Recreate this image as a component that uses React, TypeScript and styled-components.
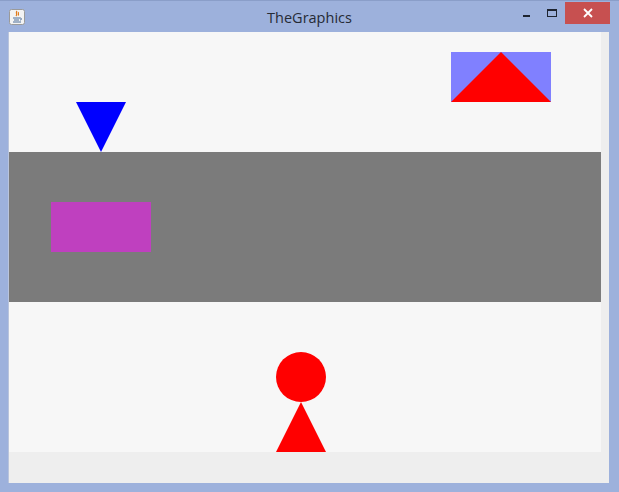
import React from "react";
import styled, { createGlobalStyle } from "styled-components";

const Global = createGlobalStyle`
  html, body { margin: 0; padding: 0; background: #9db1dc; }
  body { width: 619px; height: 492px; overflow: hidden; }
`;

const Window = styled.div`
  width: 619px;
  height: 492px;
  box-sizing: border-box;
  background: #9db1dc;
  border-top: 1px solid #8a9ec9;
  display: flex;
  flex-direction: column;
`;

const TitleBar = styled.div`
  height: 31px;
  display: flex;
  align-items: flex-start;
  position: relative;
`;

const AppIcon = styled.div`
  width: 16px;
  height: 16px;
  margin: 8px 0 0 9px;
`;

const Title = styled.div`
  position: absolute;
  left: 0;
  right: 0;
  top: 7px;
  text-align: center;
  font-family: "Open Sans", "Noto Sans", sans-serif;
  font-size: 14.5px;
  color: #262b36;
  pointer-events: none;
`;

const Controls = styled.div`
  margin-left: auto;
  margin-right: 9px;
  display: flex;
  align-items: flex-start;
`;

const CtrlButton = styled.div<{ $close?: boolean }>`
  width: ${(p) => (p.$close ? "45px" : "26px")};
  height: ${(p) => (p.$close ? "22px" : "20px")};
  margin-top: ${(p) => (p.$close ? "1px" : "0")};
  background: ${(p) => (p.$close ? "#c75050" : "transparent")};
  display: flex;
  align-items: center;
  justify-content: center;
`;

const MinGlyph = styled.div`
  width: 7px;
  height: 2px;
  background: #1e2430;
  margin-top: 10px;
`;

const MaxGlyph = styled.div`
  width: 8px;
  height: 5px;
  border: 1px solid #1e2430;
  border-top-width: 2px;
  margin-top: 4px;
`;

const Client = styled.div`
  margin: 0 10px 0 8px;
  height: 451px;
  background: #eeeeee;
  border-left: 1px solid #b9c4dc;
  display: flex;
  flex-direction: column;
`;

const Canvas = styled.svg`
  display: block;
  width: 592px;
  height: 420px;
  background: #f7f7f7;
`;

const JavaIcon = () => (
  <svg width="16" height="16" viewBox="0 0 16 16">
    <rect x="0.5" y="0.5" width="15" height="15" rx="2" fill="#f3f3f3" stroke="#9a9a9a" />
    <path d="M8 2 C6 4 9 5 7 7 M9.5 3 C8.5 4.5 10.5 5 9 6.5" stroke="#e07a1a" strokeWidth="1.2" fill="none" />
    <path d="M4 9 H11 M5 11 H10 M4 13 H12" stroke="#4d6e9a" strokeWidth="1" />
    <path d="M11 9 C13 9 13 11 11 11" stroke="#4d6e9a" strokeWidth="1" fill="none" />
  </svg>
);

const CloseX = () => (
  <svg width="10" height="10" viewBox="0 0 10 10">
    <path d="M1 1 L9 9 M9 1 L1 9" stroke="#ffffff" strokeWidth="1.8" />
  </svg>
);

export default function App() {
  return (
    <>
      <Global />
      <Window>
        <TitleBar>
          <AppIcon>
            <JavaIcon />
          </AppIcon>
          <Title>TheGraphics</Title>
          <Controls>
            <CtrlButton>
              <MinGlyph />
            </CtrlButton>
            <CtrlButton>
              <MaxGlyph />
            </CtrlButton>
            <CtrlButton $close>
              <CloseX />
            </CtrlButton>
          </Controls>
        </TitleBar>
        <Client>
          <Canvas viewBox="0 0 592 420">
            <rect x="0" y="120" width="592" height="150" fill="#7b7b7b" />
            <polygon points="67,70 117,70 92,120" fill="#0000ff" />
            <rect x="42" y="170" width="100" height="50" fill="#bf40bf" />
            <rect x="442" y="20" width="100" height="50" fill="#8080ff" />
            <polygon points="442,70 542,70 492,20" fill="#ff0000" />
            <circle cx="292" cy="345" r="25" fill="#ff0000" />
            <polygon points="267,420 317,420 292,370" fill="#ff0000" />
          </Canvas>
        </Client>
      </Window>
    </>
  );
}
